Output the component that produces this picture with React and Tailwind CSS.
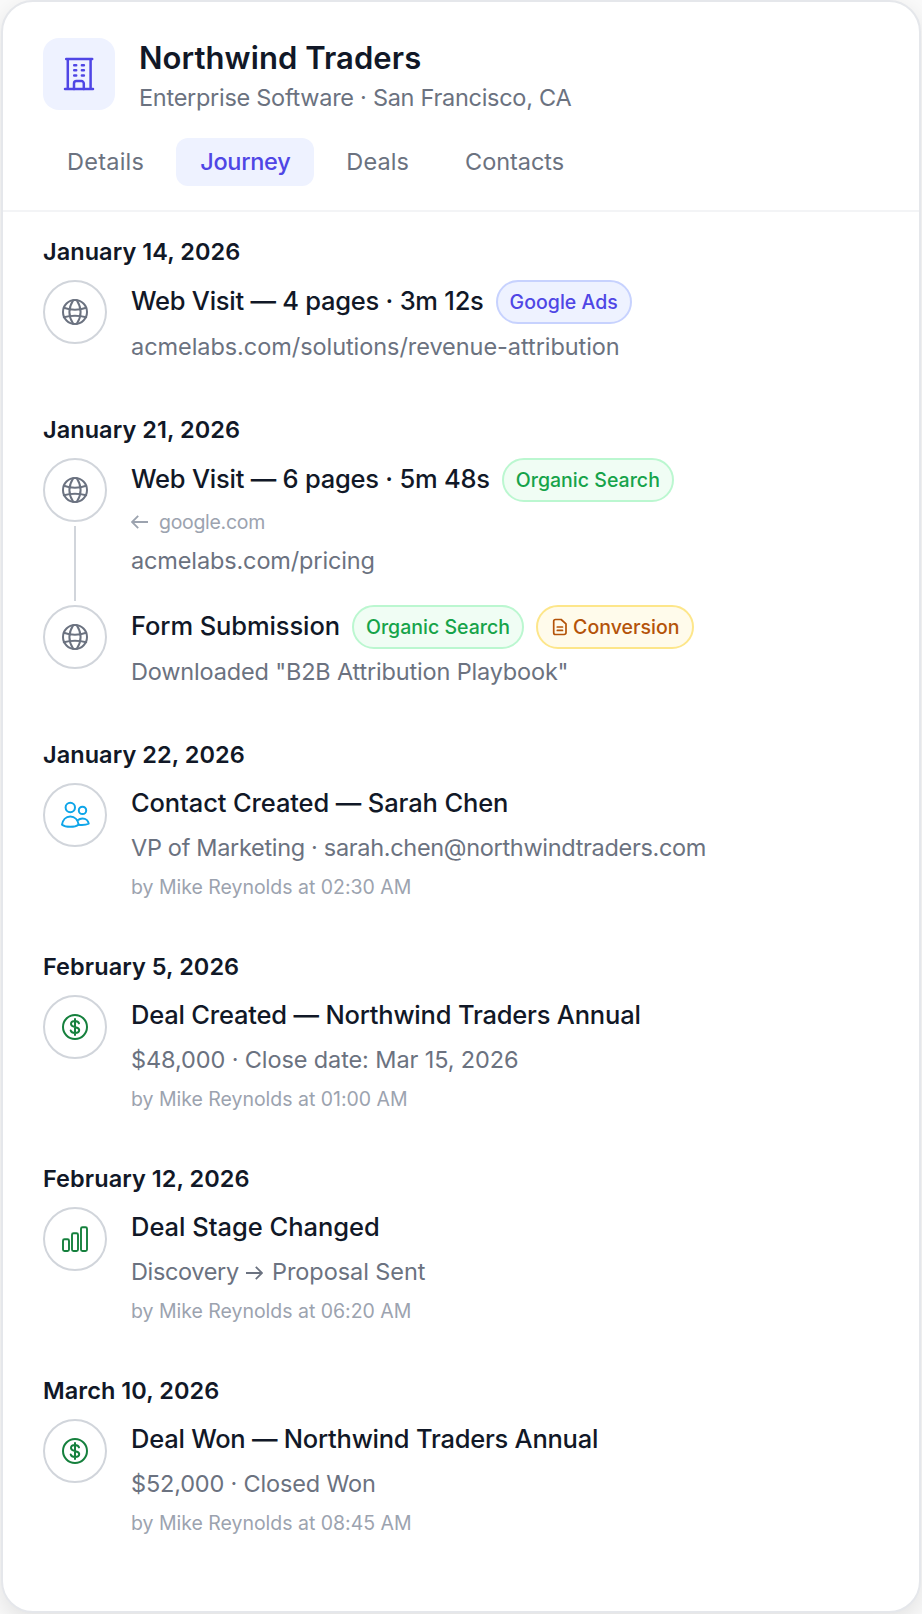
const GlobeIcon = () => (
  <svg className="w-8 h-8" viewBox="0 0 32 32" fill="none" stroke="currentColor" strokeWidth="2" strokeLinecap="round">
    <circle cx="16" cy="16" r="12" />
    <path d="M14.2 4.2Q6.6 16 14.2 27.8M17.8 4.2Q25.4 16 17.8 27.8" />
    <path d="M4.8 11.8Q16 15.6 27.2 11.8M4.8 21.2Q16 18.2 27.2 21.2" />
  </svg>
);

const UsersIcon = () => (
  <svg className="w-8 h-8" viewBox="0 0 32 32" fill="none" stroke="currentColor" strokeWidth="2" strokeLinecap="round" strokeLinejoin="round">
    <circle cx="11.3" cy="8.5" r="4.7" />
    <circle cx="23.5" cy="11.4" r="3.7" />
    <path d="M11.3 17.5c-4.6 0-7.6 3.6-8.3 8.2 0 0 2.8 2.1 8.3 2.1s8.3-2.1 8.3-2.1c-.7-4.6-3.7-8.2-8.3-8.2z" />
    <path d="M18.7 21.3c1.3-1.1 2.8-1.8 4.8-1.8 3.3 0 5.8 2.4 6.2 5.2 0 0-2.6 1.3-6.700 1.3-1.300 0-2.500-.1-3.400-.3" />
  </svg>
);

const DollarIcon = () => (
  <svg className="w-8 h-8" viewBox="0 0 32 32" fill="none" stroke="currentColor" strokeWidth="2" strokeLinecap="round" strokeLinejoin="round">
    <circle cx="16" cy="16" r="12" />
    <path d="M20 12.4c-.5-1.4-2-2.3-4-2.3-2.4 0-4 1.1-4 2.8 0 4.3 8.2 1.7 8.2 6.2 0 1.8-1.7 2.9-4.2 2.9-2.2 0-3.8-.9-4.3-2.5M16 8v16" />
  </svg>
);

const BarsIcon = () => (
  <svg className="w-8 h-8" viewBox="0 0 32 32" fill="none" stroke="currentColor" strokeWidth="1.9">
    <rect x="4" y="16.3" width="6" height="11.7" rx="1.5" />
    <rect x="13" y="10.3" width="6" height="17.7" rx="1.5" />
    <rect x="22" y="4.3" width="6" height="23.7" rx="1.5" />
  </svg>
);

const FormIcon = () => (
  <svg className="w-5 h-5" viewBox="0 0 20 20" fill="none" stroke="currentColor" strokeWidth="1.7" strokeLinecap="round" strokeLinejoin="round">
    <path d="M5.5 2.5h5.6l4.9 4.4v8.8a1.8 1.8 0 0 1-1.8 1.8H5.5a1.8 1.8 0 0 1-1.800-1.800V4.300a1.800 1.800 0 0 1 1.800-1.800z" />
    <path d="M7.3 10h5.2M7.3 13.400h5.200" />
  </svg>
);

const ArrowIcon = ({ className }) => (
  <svg className={className} viewBox="0 0 18 16" fill="none" stroke="currentColor" strokeWidth="1.8">
    <path d="M1 8h16M10.800 1.800 17 8l-6.200 6.200" />
  </svg>
);

const badgeStyles = {
  ads: 'bg-[#eef2ff] border-[#c7d2fe] text-[#4f46e5]',
  organic: 'bg-[#f0fdf4] border-[#bbf7d0] text-[#16a34a]',
  conversion: 'bg-[#fffbeb] border-[#fde68a] text-[#b45309]',
};

const icons = {
  visit: <span className="text-[#6b7280]"><GlobeIcon /></span>,
  contact: <span className="text-[#0ea5e9]"><UsersIcon /></span>,
  deal: <span className="text-[#15803d]"><DollarIcon /></span>,
  stage: <span className="text-[#15803d]"><BarsIcon /></span>,
};

const tabs = [
  { label: 'Details', style: 'tracking-[0.25px] text-[#6b7280]' },
  { label: 'Journey', style: 'tracking-[-0.3px] bg-[#eef2ff] text-[#4f46e5] font-medium' },
  { label: 'Deals', style: 'tracking-[0.1px] text-[#6b7280]' },
  { label: 'Contacts', style: 'tracking-[-0.05px] text-[#6b7280]' },
];

const days = [
  {
    date: 'January 14, 2026',
    events: [
      {
        icon: 'visit',
        title: 'Web Visit — 4 pages · 3m 12s',
        titleStyle: 'tracking-[-0.25px]',
        badges: [{ type: 'ads', label: 'Google Ads' }],
        detail: 'acmelabs.com/solutions/revenue-attribution',
        detailStyle: 'tracking-[-0.06px]',
      },
    ],
  },
  {
    date: 'January 21, 2026',
    events: [
      {
        icon: 'visit',
        title: 'Web Visit — 6 pages · 5m 48s',
        titleStyle: 'tracking-[-0.23px]',
        badges: [{ type: 'organic', label: 'Organic Search' }],
        referrer: 'google.com',
        detail: 'acmelabs.com/pricing',
        detailStyle: 'tracking-[-0.14px]',
      },
      {
        icon: 'visit',
        title: 'Form Submission',
        titleStyle: 'tracking-[-0.1px]',
        badges: [
          { type: 'organic', label: 'Organic Search' },
          { type: 'conversion', label: 'Conversion' },
        ],
        detail: 'Downloaded "B2B Attribution Playbook"',
        detailStyle: 'tracking-[-0.17px]',
      },
    ],
  },
  {
    date: 'January 22, 2026',
    events: [
      {
        icon: 'contact',
        title: 'Contact Created — Sarah Chen',
        titleStyle: 'tracking-[-0.12px]',
        detail: 'VP of Marketing · sarah.chen@northwindtraders.com',
        detailStyle: 'tracking-[-0.32px]',
        by: 'by Mike Reynolds at 02:30 AM',
      },
    ],
  },
  {
    date: 'February 5, 2026',
    events: [
      {
        icon: 'deal',
        title: 'Deal Created — Northwind Traders Annual',
        titleStyle: 'tracking-[-0.2px]',
        detail: '$48,000 · Close date: Mar 15, 2026',
        detailStyle: 'tracking-[-0.11px]',
        by: 'by Mike Reynolds at 01:00 AM',
      },
    ],
  },
  {
    date: 'February 12, 2026',
    events: [
      {
        icon: 'stage',
        title: 'Deal Stage Changed',
        titleStyle: 'tracking-[-0.02px]',
        detail: (
          <>
            <span className="tracking-[-0.35px]">Discovery</span>{' '}
            <ArrowIcon className="inline w-[18px] h-4 mr-0.5 -mt-0.5" /> Proposal Sent
          </>
        ),
        detailStyle: 'tracking-[-0.06px]',
        by: 'by Mike Reynolds at 06:20 AM',
      },
    ],
  },
  {
    date: 'March 10, 2026',
    events: [
      {
        icon: 'deal',
        title: 'Deal Won — Northwind Traders Annual',
        titleStyle: 'tracking-[-0.24px]',
        detail: '$52,000 · Closed Won',
        detailStyle: 'tracking-[-0.18px]',
        by: 'by Mike Reynolds at 08:45 AM',
      },
    ],
  },
];

function Badge({ type, label }) {
  return (
    <span className={`flex items-center h-11 px-3 rounded-full border-2 text-[19.5px] font-medium tracking-[0.02px] whitespace-nowrap ${badgeStyles[type]}`}>
      {type === 'conversion' && <span className="mr-[3px]"><FormIcon /></span>}
      <span className="pt-0.5">{label}</span>
    </span>
  );
}

function Event({ event, last }) {
  return (
    <div className="flex gap-6">
      <div className="flex flex-col items-center shrink-0">
        <div className="w-16 h-16 rounded-full border-2 border-[#d1d5db] flex items-center justify-center shrink-0">
          {icons[event.icon]}
        </div>
        {!last && <div className="w-0.5 flex-1 my-1 bg-[#d1d5db]" />}
      </div>

      <div className="flex-1 min-w-0 pb-[26px]">
        <div className="flex items-center gap-3 min-h-[42px]">
          <span className={`pb-0.5 text-[25.5px] leading-[38px] font-medium text-[#111827] whitespace-nowrap ${event.titleStyle}`}>{event.title}</span>
          {event.badges?.map((b) => <Badge key={b.label} {...b} />)}
        </div>
        {event.referrer && (
          <div className="flex items-center gap-2.5 mt-[5px] mb-[5px] text-[19.5px] leading-[30px] tracking-[-0.3px] text-[#9ca3af]">
            <ArrowIcon className="w-[18px] h-4 rotate-180" />
            {event.referrer}
          </div>
        )}
        <p className={`text-[23.5px] leading-[37px] text-[#6b7280] whitespace-nowrap ${event.detailStyle} ${event.referrer ? '' : 'mt-1'}`}>
          {event.detail}
        </p>
        {event.by && <p className="mt-1.5 text-[19.5px] leading-[30px] tracking-[-0.02px] text-[#9ca3af]">{event.by}</p>}
      </div>
    </div>
  );
}

export default function App() {
  return (
    <div className="bg-[#fafafa] px-px h-[1614px] overflow-hidden font-['Inter',sans-serif]">
      <div className="h-[1613px] bg-white border-2 border-[#e5e7eb] rounded-[32px] shadow-[0_8px_24px_rgba(0,0,0,0.1)]">
        <div className="px-10 pt-9 pb-6 border-b-2 border-[#f3f4f6]">
          <div className="flex gap-6 h-[72px]">
            <div className="w-[72px] h-[72px] rounded-2xl bg-[#eef2ff] text-[#4f46e5] flex items-center justify-center">
              <svg className="w-9 h-9" viewBox="0 0 36 36" fill="none" stroke="currentColor" strokeWidth="2.500" strokeLinecap="round" strokeLinejoin="round">
                <path d="M5.2 3h26M6.8 3v30M29.6 3v30M4 33h28" />
                <path d="M13 33v-5.5a2.4 2.4 0 0 1 2.4-2.4h5a2.4 2.4 0 0 1 2.4 2.4V33" />
                <path d="M13.2 9.2h2M20.9 9.2h2M13.2 14.3h2M20.9 14.3h2M13.2 19.4h2M20.9 19.4h2" />
              </svg>
            </div>
            <div>
              <h1 className="text-[31px] leading-10 font-semibold tracking-[0.07px] text-[#111827]">Northwind Traders</h1>
              <p className="text-[23.5px] leading-10 tracking-[-0.28px] text-[#6b7280]">Enterprise Software · San Francisco, CA</p>
            </div>
          </div>

          <div className="flex gap-2 mt-7">
            {tabs.map((tab) => (
              <button key={tab.label} className={`h-12 px-6 rounded-xl text-[23.5px] ${tab.style}`}>
                {tab.label}
              </button>
            ))}
          </div>
        </div>

        <div className="px-10 pt-6">
          {days.map((day) => (
            <section key={day.date} className="mb-[23px]">
              <h2 className="mb-3 text-[23.5px] leading-8 font-semibold tracking-[0.06px] text-[#111827]">{day.date}</h2>
              {day.events.map((event, i) => (
                <Event key={event.title} event={event} last={i === day.events.length - 1} />
              ))}
            </section>
          ))}
        </div>
      </div>
    </div>
  );
}
